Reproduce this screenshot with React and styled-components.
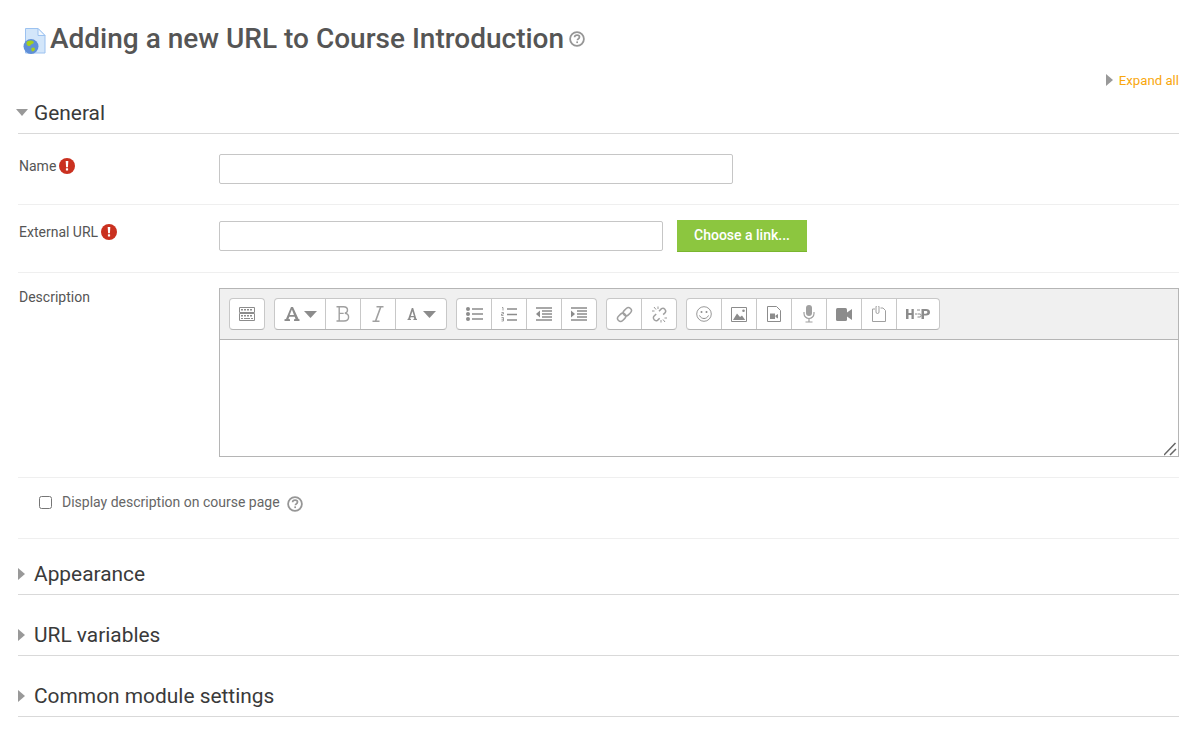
import React from "react";
import styled, { createGlobalStyle } from "styled-components";

const Global = createGlobalStyle`
  html, body { margin: 0; padding: 0; background: #fff; }
  body { font-family: Roboto, "Liberation Sans", sans-serif; color: #555; overflow: hidden; }
  * { box-sizing: border-box; }
`;

const Page = styled.div`
  width: 1199px;
  height: 739px;
  padding: 0 20px 0 18px;
  overflow: hidden;
`;
const TitleRow = styled.div`
  display: flex;
  align-items: center;
  height: 40px;
  margin-top: 19px;
  padding-left: 4px;
  margin-bottom: -1px;
`;
const TitleIcon = styled.svg`
  width: 24px;
  height: 26px;
  flex: none;
  margin: 3px 4px 0 0;
`;
const Title = styled.h1`
  margin: 0;
  font-size: 28px;
  font-weight: 500;
  line-height: 40px;
  color: #555;
`;
const TitleHelp = styled.span`
  display: flex;
  margin-left: 5px;
`;
const ExpandRow = styled.div`
  display: flex;
  justify-content: flex-end;
  align-items: center;
  gap: 6px;
  height: 16px;
  margin-top: 14px;
  font-size: 13.2px;
  color: #f9a70e;
`;
const SectionHead = styled.div`
  display: flex;
  align-items: center;
  height: ${p => p.$h}px;
  padding-top: ${p => p.$pt || 0}px;
  padding-bottom: ${p => p.$pb || 0}px;
  border-bottom: 1px solid #d9d9d9;
  font-size: 20.9px;
  color: #3a3a3a;
  margin-top: ${p => p.$mt || 0}px;
`;
const Caret = styled.span`
  display: flex;
  justify-content: center;
  width: ${p => (p.$open ? 12 : 7)}px;
  margin-left: ${p => (p.$open ? -2 : 0)}px;
  margin-right: ${p => (p.$open ? 6 : 9)}px;
  flex: none;
`;
const Row = styled.div`
  display: flex;
  align-items: flex-start;
  height: ${p => p.$h}px;
  padding-top: ${p => p.$pt}px;
  border-bottom: 1px solid #efefef;
`;
const Label = styled.div`
  display: flex;
  align-items: center;
  gap: 3px;
  width: 201px;
  height: 24px;
  flex: none;
  padding-left: 1px;
  font-size: 14px;
  color: #555;
  margin-top: ${p => p.$mt || 0}px;
`;
const TextInput = styled.input`
  width: ${p => p.$w}px;
  height: 30px;
  border: 1px solid #c6c6c6;
  border-radius: 2px;
  background: #fff;
  margin-top: ${p => p.$mt || 0}px;
`;
const GreenButton = styled.button`
  width: 130px;
  height: 32px;
  margin-left: 14px;
  border: 0;
  border-bottom: 1px solid #7ab62f;
  background: #8cc63f;
  color: #fff;
  font: 500 14px Roboto, sans-serif;
  padding: 0 0 2px;
`;
const Editor = styled.div`
  width: 960px;
  height: 169px;
  border: 1px solid #b5b5b5;
  position: relative;
`;
const Toolbar = styled.div`
  display: flex;
  gap: 9px;
  height: 51px;
  padding: 9px 9px 0;
  background: #f0f0f0;
  border-bottom: 1px solid #b5b5b5;
`;
const Group = styled.div`
  display: flex;
  height: 32px;
  background: #fff;
  border: 1px solid #c8c8c8;
  border-bottom-color: #b4b4b4;
  border-radius: 4px;
`;
const Tool = styled.div`
  display: flex;
  align-items: center;
  justify-content: center;
  width: ${p => p.$w}px;
  height: 100%;
  border-left: ${p => (p.$first ? 0 : "1px solid #c8c8c8")};
`;
const Grip = styled.svg`
  position: absolute;
  right: 0;
  bottom: 0;
`;
const CheckRow = styled(Row)`
  padding-left: 21px;
  align-items: center;
  padding-top: 0;
  padding-bottom: 12px;
  font-size: 14px;
  color: #666;
`;
const Box = styled.span`
  width: 13px;
  height: 13px;
  border: 1px solid #767676;
  border-radius: 2.5px;
  margin-right: 10px;
  flex: none;
`;
const CheckHelp = styled.span`
  display: flex;
  margin-left: 7px;
  margin-top: 3px;
`;

const HelpIcon = ({ s = 16 }) => (
  <svg width={s} height={s} viewBox="0 0 16 16">
    <circle cx="8" cy="8" r="6.9" fill="none" stroke="#969696" strokeWidth="1.8" />
    <path d="M5.6 6.3c0-1.4 1.1-2.2 2.5-2.2s2.4.8 2.4 2c0 1-.6 1.5-1.3 1.9-.6.4-.8.7-.8 1.3" fill="none" stroke="#969696" strokeWidth="1.7" />
    <rect x="7.3" y="10.4" width="1.7" height="1.7" fill="#969696" />
  </svg>
);
const ErrorIcon = () => (
  <svg width="16" height="16" viewBox="0 0 16 16">
    <circle cx="8" cy="8" r="8" fill="#ca3120" />
    <path d="M6.7 3h2.6l-.4 6.2H7.1z" fill="#fff" />
    <rect x="6.9" y="10.2" width="2.2" height="2.4" rx=".4" fill="#fff" />
  </svg>
);
const Right = ({ c = "#999" }) => (
  <svg width="7" height="12" viewBox="0 0 7 12"><path d="M0 0l7 6-7 6z" fill={c} /></svg>
);
const Down = () => (
  <svg width="12" height="7" viewBox="0 0 12 7"><path d="M0 0h12L6 7z" fill="#999" /></svg>
);
const I = ({ w = 20, h = 20, children }) => (
  <svg width={w} height={h} viewBox={`0 0 ${w} ${h}`}>{children}</svg>
);
const G = "#8c8c8c";
const L = "#a0a0a0";

const Kb = () => (
  <I w={16} h={14}>
    <path d="M.5.5h15v5H.5zM.5 6.500h15v7H.5z" fill="#fff" stroke={G} />
    <path d="M2 2h2v1.500H2zm3 0h2v1.500H5zm3 0h2v1.500H8zm3 0h2v1.500h-2zM2 8h2v1.500H2zm3 0h2v1.500H5zm3 0h2v1.500H8zm3 0h2v1.500h-2zM2 11h2v1H2zm3 0h6v1H5zm7 0h2v1h-2z" fill={G} />
  </I>
);
const FontA = ({ s = 16 }) => (
  <I w={s} h={s}>
    <path d={s === 16 ? "M.5 15h5.500v-1.800l-1.500-.2.8-2.200h5.400l.8 2.200-1.500.2V15h5.500v-1.800l-1-.2L9 1H7L2 13l-1.500.2zM5.700 9 7.900 3.600 10 9z" : "M.5 12h3.500v-1l-.9-.2.5-1.500h3.200l.5 1.500-.9.2v1h3.600v-1l-.7-.2L6.200 0H4.800L1.200 10.800l-.7.2zM3.900 8 5.400 3.300 6.900 8z"} fill={G} />
  </I>
);
const Arrow = () => (
  <svg width="13" height="7" viewBox="0 0 13 7" style={{ marginLeft: 4 }}><path d="M0 0h13L6.500 7z" fill={G} /></svg>
);
const Bold = () => (
  <I w={14} h={16}>
    <path d="M.5.800h7c2.500 0 4 1 4 3.300 0 1.700-1 2.800-2.600 3.200 2 .3 3.700 1.500 3.700 3.700 0 2.600-1.900 4-4.700 4h-7.400M3.200.8v14.400M3.200 7.400h4.500" fill="none" stroke={L} strokeWidth="1.400" />
  </I>
);
const Ital = () => (
  <I w={12} h={16}>
    <path d="M4.500.8h7M.5 15.200h7M8.800.8 3.500 15.200" fill="none" stroke={L} strokeWidth="1.600" />
  </I>
);
const Bullets = () => (
  <I w={17} h={14}>
    <circle cx="2" cy="2" r="2" fill={G} /><circle cx="2" cy="7" r="2" fill={G} /><circle cx="2" cy="12" r="2" fill={G} />
    <path d="M6 2h11M6 7h11M6 12h11" fill="none" stroke={G} strokeWidth="1.500" />
  </I>
);
const Numbers = () => (
  <I w={16} h={15}>
    <path d="M1 .5h1v3M.5 5.500h2v1.500h-2v1.500h2M.5 10.500h2v3.500h-2M.5 12.200h2" fill="none" stroke={G} strokeWidth=".8" />
    <path d="M6 2h10M6 7.500h10M6 13h10" fill="none" stroke={G} strokeWidth="1.500" />
  </I>
);
const Outdent = () => (
  <I w={16} h={14}>
    <path d="M0 7l4-3.500v7z" fill={G} />
    <path d="M0 1h16M6 4h10M6 7h10M6 10h10M0 13h16" fill="none" stroke={G} strokeWidth="1.500" />
  </I>
);
const Indent = () => (
  <I w={16} h={14}>
    <path d="M4 7 0 3.500v7z" fill={G} />
    <path d="M0 1h16M6 4h10M6 7h10M6 10h10M0 13h16" fill="none" stroke={G} strokeWidth="1.500" />
  </I>
);
const Link = () => (
  <I w={17} h={17}>
    <g fill="none" stroke={L} strokeWidth="1.500" transform="rotate(-45 8.500 8.500)">
      <rect x="0" y="5.500" width="9" height="6" rx="3" />
      <rect x="8" y="5.500" width="9" height="6" rx="3" />
    </g>
  </I>
);
const Unlink = () => (
  <I w={17} h={17}>
    <g fill="none" stroke={L} strokeWidth="1.500" transform="rotate(-45 8.500 8.500)">
      <path d="M6.500 5.800H3a2.800 2.800 0 0 0 0 5.400h3" />
      <path d="M10.500 5.800H14a2.800 2.800 0 0 1 0 5.400h-3" />
    </g>
    <path d="M3 1l2 2.500M7 .5V3M1 5h2.500M14 16l-2-2.500M10 16.500V14M16 12h-2.500" stroke={G} strokeWidth=".9" fill="none" />
  </I>
);
const Smile = () => (
  <I w={16} h={16}>
    <circle cx="8" cy="8" r="7.300" fill="none" stroke={G} strokeWidth=".9" />
    <circle cx="5.500" cy="6" r="1" fill={G} /><circle cx="10.500" cy="6" r="1" fill={G} />
    <path d="M3.500 9.500c1 2 2.700 3 4.500 3s3.500-1 4.500-3" fill="none" stroke={G} />
  </I>
);
const Picture = () => (
  <I w={16} h={15}>
    <path d="M.5.500h15v14H.5z" fill="#fff" stroke={G} />
    <path d="M2 13l4-6.500 3 3.500 2-1.500 3.200 4.500z" fill={G} />
    <circle cx="12.500" cy="3.800" r="1.300" fill={G} />
  </I>
);
const VideoFile = () => (
  <I w={14} h={16}>
    <path d="M.5.500h9l4 4v11H.5z" fill="#fff" stroke={G} />
    <path d="M3 7.500h5v5.500H3zM8.500 9.500l2.500-1.500v4.500l-2.500-1.500z" fill={G} />
  </I>
);
const Mic = () => (
  <I w={12} h={18}>
    <rect x="3" y="0" width="6" height="11" rx="3" fill={L} />
    <path d="M1 7v1.500a5 5 0 0 0 10 0V7M6 13.500V17M2.500 17h7" fill="none" stroke={L} strokeWidth="1.200" />
  </I>
);
const Cam = () => (
  <I w={16} h={13}>
    <rect x="0" y="0" width="11" height="13" rx="1.500" fill={G} />
    <path d="M11 4.500 16 1v11l-5-3.500z" fill={G} />
  </I>
);
const Clip = () => (
  <I w={14} h={16}>
    <path d="M3 3H.5v12.500h13V4.500L11 2H8.500" fill="none" stroke={L} />
    <path d="M4 1v5a1.500 1.500 0 0 0 3 0V1a1 1 0 0 0-3 0" fill="none" stroke={L} />
  </I>
);
const H5p = () => (
  <I w={24} h={12}>
    <path d="M0 1h2.500v4h3V1h2.300v10H5.500V7h-3v4H0zM15.500 1h4.500c2.500 0 4 1 4 3.200S22.500 7.500 20 7.500h-2V11h-2.500zM18 3v2.700h1.800c1 0 1.600-.5 1.600-1.400S20.800 3 19.800 3z" fill={G} />
    <path d="M9 6h2.500M11 2h3M11.500 9h2.500c1.500 0 1.500-3 0-3h-2" fill="none" stroke={G} strokeWidth="1" />
  </I>
);

const groups = [
  [[<Kb key="k" />, 34]],
  [[<React.Fragment key="a"><FontA /><Arrow /></React.Fragment>, 50], [<Bold key="b" />, 35], [<Ital key="i" />, 35], [<React.Fragment key="c"><FontA s={12} /><Arrow /></React.Fragment>, 51]],
  [[<Bullets key="1" />, 34], [<Numbers key="2" />, 35], [<Outdent key="3" />, 35], [<Indent key="4" />, 35]],
  [[<Link key="l" />, 34], [<Unlink key="u" />, 35]],
  [[<Smile key="s" />, 34], [<Picture key="p" />, 35], [<VideoFile key="v" />, 35], [<Mic key="m" />, 35], [<Cam key="c" />, 35], [<Clip key="cl" />, 35], [<H5p key="h" />, 43]],
];

export default function App() {
  return (
    <Page>
      <Global />
      <TitleRow>
        <TitleIcon viewBox="0 0 24 26">
          <path d="M3.500.5H16l7 7v17.500H3.500z" fill="#d3e6fa" stroke="#9cc2f0" />
          <path d="M16 .5V7.500h7z" fill="#f2f8fe" stroke="#9cc2f0" />
          <circle cx="9" cy="18.500" r="7.500" fill="#5f8fd8" />
          <path d="M5 13.500c2-1 5-1.500 6.500 0 1 1.500-1 2.500-2.500 3-.5 1.500-2 2-3.500 1-1-1-1.500-2.500-.5-4zM9.500 20c1.500-1 3.500-.5 3.500 1 0 1.500-1.500 2.500-2.500 2.500-1 0-1.500-2-1-3.500z" fill="#a4cf1f" />
        </TitleIcon>
        <Title>Adding a new URL to Course Introduction</Title>
        <TitleHelp><HelpIcon /></TitleHelp>
      </TitleRow>
      <ExpandRow><Right />Expand all</ExpandRow>
      <SectionHead $h={46} $pt={4}><Caret $open><Down /></Caret>General</SectionHead>
      <Row $h={71} $pt={20}>
        <Label>Name <ErrorIcon /></Label>
        <TextInput $w={514} />
      </Row>
      <Row $h={68} $pt={15}>
        <Label>External URL <ErrorIcon /></Label>
        <TextInput $w={444} $mt={1} />
        <GreenButton>Choose a link...</GreenButton>
      </Row>
      <Row $h={205} $pt={15}>
        <Label $mt={-3}>Description</Label>
        <Editor>
          <Toolbar>
            {groups.map((g, i) => (
              <Group key={i}>
                {g.map(([icon, w], j) => <Tool key={j} $first={j === 0} $w={w}>{icon}</Tool>)}
              </Group>
            ))}
          </Toolbar>
          <Grip width="14" height="14" viewBox="0 0 14 14">
            <path d="M0 13 11.500 1M6 13l6-6" stroke="#666" strokeWidth="1.500" fill="none" />
          </Grip>
        </Editor>
      </Row>
      <CheckRow $h={61} $pt={0}>
        <Box />Display description on course page
        <CheckHelp><HelpIcon /></CheckHelp>
      </CheckRow>
      <SectionHead $mt={20} $h={36} $pb={6}><Caret><Right /></Caret>Appearance</SectionHead>
      <SectionHead $mt={25} $h={36} $pb={6}><Caret><Right /></Caret>URL variables</SectionHead>
      <SectionHead $mt={25} $h={36} $pb={6}><Caret><Right /></Caret>Common module settings</SectionHead>
    </Page>
  );
}
